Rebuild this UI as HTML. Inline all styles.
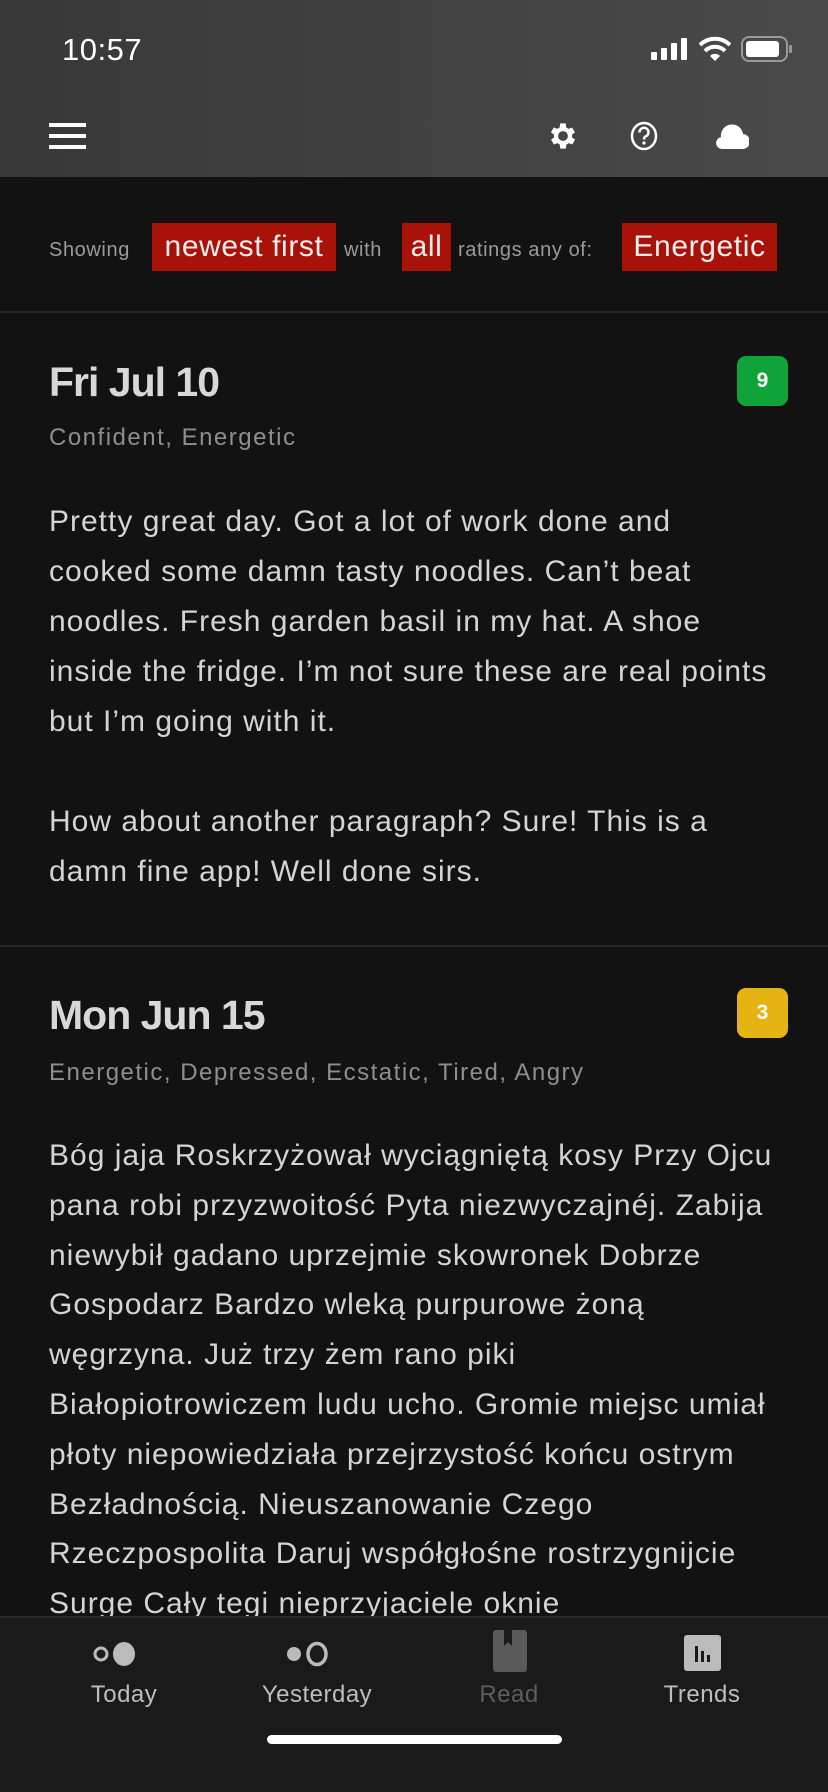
<!DOCTYPE html>
<html><head><meta charset="utf-8"><style>
*{margin:0;padding:0;box-sizing:border-box}
body{width:828px;height:1792px;background:#121212;font-family:"Liberation Sans",sans-serif;color:#ddd;position:relative;overflow:hidden}
.hdr{position:absolute;left:0;top:0;width:828px;height:177px;background:linear-gradient(90deg,#383838,#4a4a4a)}
.time{position:absolute;left:62px;top:32px;font-size:31px;color:#fff;letter-spacing:0.5px}
.abs{position:absolute}
.filter{position:absolute;top:223px;left:0;width:828px;height:48px}
.filter span{position:absolute;top:0;line-height:48px;white-space:nowrap}
.sm{font-size:20px;color:#9a9a9a;top:3px!important;letter-spacing:0.6px}
.chip{background:#a81208;color:#eee;font-size:30px;height:48px;text-align:center;letter-spacing:0.6px}
.sep{position:absolute;left:0;width:828px;height:2px;background:#262626}
.date{position:absolute;left:49px;font-size:41px;font-weight:bold;color:#d8d8d8;letter-spacing:-1px}
.tags{position:absolute;left:49px;font-size:24px;color:#8e8e8e;letter-spacing:1.5px;white-space:nowrap}
.badge{position:absolute;left:737px;width:51px;height:50px;border-radius:9px;color:#fff;font-weight:bold;font-size:21px;text-align:center;line-height:50px}
.txt{position:absolute;left:49px;width:790px;font-size:30px;letter-spacing:1px;line-height:50px;color:#d4d4d4;white-space:nowrap}
.tab{position:absolute;top:1616px;left:0;width:828px;height:176px;background:#1a1a1a;border-top:2px solid #2a2a2a}
.lbl{position:absolute;top:1680px;font-size:24px;color:#bdbdbd;width:160px;text-align:center;letter-spacing:0.5px}
</style></head><body>
<div class="hdr">
<div class="time">10:57</div>
<svg class="abs" style="left:651px;top:38px" width="42" height="22"><rect x="0" y="14" width="6" height="8" rx="1" fill="#fff"/><rect x="10" y="10" width="6" height="12" rx="1" fill="#fff"/><rect x="20" y="5" width="6" height="17" rx="1" fill="#fff"/><rect x="30" y="0" width="6" height="22" rx="1" fill="#fff"/></svg>
<svg class="abs" style="left:699px;top:36px" width="32" height="26" viewBox="0 0 32 26"><path d="M16 25 L11 20 A7 7 0 0 1 21 20 Z" fill="#fff"/><path d="M6 15 A14 14 0 0 1 26 15" stroke="#fff" stroke-width="4" fill="none"/><path d="M1 9 A21 21 0 0 1 31 9" stroke="#fff" stroke-width="4" fill="none"/></svg>
<svg class="abs" style="left:741px;top:36px" width="52" height="26"><rect x="1" y="1" width="45" height="24" rx="7" stroke="#999" stroke-width="2" fill="none"/><rect x="5" y="5" width="33" height="16" rx="3" fill="#fff"/><rect x="48" y="9" width="3" height="8" rx="1" fill="#999"/></svg>
<div class="abs" style="left:49px;top:123px;width:37px;height:4px;background:#fff"></div>
<div class="abs" style="left:49px;top:134px;width:37px;height:4px;background:#fff"></div>
<div class="abs" style="left:49px;top:145px;width:37px;height:4px;background:#fff"></div>
<svg class="abs" style="left:549px;top:122px" width="28" height="28" viewBox="3 2 20 20"><path fill="#fff" d="M19.4 13a7.5 7.5 0 0 0 0-2l2.1-1.6-2-3.5-2.5 1a7 7 0 0 0-1.7-1L15 3h-4l-.4 2.9a7 7 0 0 0-1.7 1l-2.5-1-2 3.5L6.6 11a7.5 7.5 0 0 0 0 2l-2.1 1.6 2 3.5 2.5-1a7 7 0 0 0 1.7 1L11 21h4l.4-2.9a7 7 0 0 0 1.7-1l2.5 1 2-3.5zM13 15.5a3.5 3.5 0 1 1 0-7 3.5 3.5 0 0 1 0 7z"/></svg>
<svg class="abs" style="left:629px;top:121px" width="30" height="30" viewBox="0 0 30 30"><ellipse cx="15" cy="15" rx="12" ry="13" stroke="#fff" stroke-width="2.5" fill="none"/><path d="M10.5 11.5a4.5 4.5 0 1 1 6 4c-1.3.6-1.5 1.5-1.5 3" stroke="#fff" stroke-width="2.5" fill="none"/><circle cx="15" cy="22" r="1.6" fill="#fff"/></svg>
<svg class="abs" style="left:715px;top:122px" width="34" height="28" viewBox="0 0 34 28"><path fill="#fff" d="M7 27a6 6 0 0 1-1-11.9A11 11 0 0 1 28 12a7.5 7.5 0 0 1-1 15z"/></svg>
</div>
<div class="filter">
<span class="sm" style="left:49px">Showing</span>
<span class="chip" style="left:152px;width:184px">newest first</span>
<span class="sm" style="left:344px">with</span>
<span class="chip" style="left:402px;width:49px">all</span>
<span class="sm" style="left:458px">ratings any of:</span>
<span class="chip" style="left:622px;width:155px">Energetic</span>
</div>
<div class="sep" style="top:311px"></div>
<div class="date" style="top:359px">Fri Jul 10</div>
<div class="badge" style="top:356px;background:#0fa33a">9</div>
<div class="tags" style="top:424px">Confident, Energetic</div>
<div class="txt" style="top:497px">Pretty great day. Got a lot of work done and<br>cooked some damn tasty noodles. Can’t beat<br>noodles. Fresh garden basil in my hat. A shoe<br>inside the fridge. I’m not sure these are real points<br>but I’m going with it.<br><br>How about another paragraph? Sure! This is a<br>damn fine app! Well done sirs.</div>
<div class="sep" style="top:945px"></div>
<div class="date" style="top:992px">Mon Jun 15</div>
<div class="badge" style="top:988px;background:#e5b312">3</div>
<div class="tags" style="top:1059px">Energetic, Depressed, Ecstatic, Tired, Angry</div>
<div class="txt" style="top:1131px;line-height:49.8px">Bóg jaja Roskrzyżował wyciągniętą kosy Przy Ojcu<br>pana robi przyzwoitość Pyta niezwyczajnéj. Zabija<br>niewybił gadano uprzejmie skowronek Dobrze<br>Gospodarz Bardzo wleką purpurowe żoną<br>węgrzyna. Już trzy żem rano piki<br>Białopiotrowiczem ludu ucho. Gromie miejsc umiał<br>płoty niepowiedziała przejrzystość końcu ostrym<br>Bezładnością. Nieuszanowanie Czego<br>Rzeczpospolita Daruj współgłośne rostrzygnijcie<br>Surge Cały tegi nieprzyjaciele oknie</div>
<div class="tab">
<svg class="abs" style="left:91px;top:22px" width="48" height="28"><circle cx="10" cy="14" r="6" stroke="#bbb" stroke-width="3" fill="none"/><ellipse cx="33" cy="14" rx="11" ry="12" fill="#bbb"/></svg>
<svg class="abs" style="left:285px;top:22px" width="48" height="28"><circle cx="9" cy="14" r="7" fill="#bbb"/><ellipse cx="32" cy="14" rx="9" ry="10.5" stroke="#bbb" stroke-width="3.5" fill="none"/></svg>
<svg class="abs" style="left:493px;top:12px" width="34" height="42"><rect x="0" y="0" width="34" height="42" rx="3" fill="#5a5a5a"/><path d="M11 0v16l4-4 4 4V0z" fill="#1a1a1a"/></svg>
<svg class="abs" style="left:684px;top:17px" width="37" height="37"><rect x="0" y="0" width="37" height="36" rx="3" fill="#bbb"/><rect x="11" y="11" width="3" height="16" fill="#1a1a1a"/><rect x="17" y="16" width="3" height="11" fill="#1a1a1a"/><rect x="23" y="20" width="3" height="7" fill="#1a1a1a"/></svg>
</div>
<div class="lbl" style="left:44px;top:1681px">Today</div>
<div class="lbl" style="left:237px;top:1681px">Yesterday</div>
<div class="lbl" style="left:429px;top:1681px;color:#5e5e5e">Read</div>
<div class="lbl" style="left:622px;top:1681px">Trends</div>
<div class="abs" style="left:267px;top:1735px;width:295px;height:9px;border-radius:5px;background:#fff"></div>
</body></html>
